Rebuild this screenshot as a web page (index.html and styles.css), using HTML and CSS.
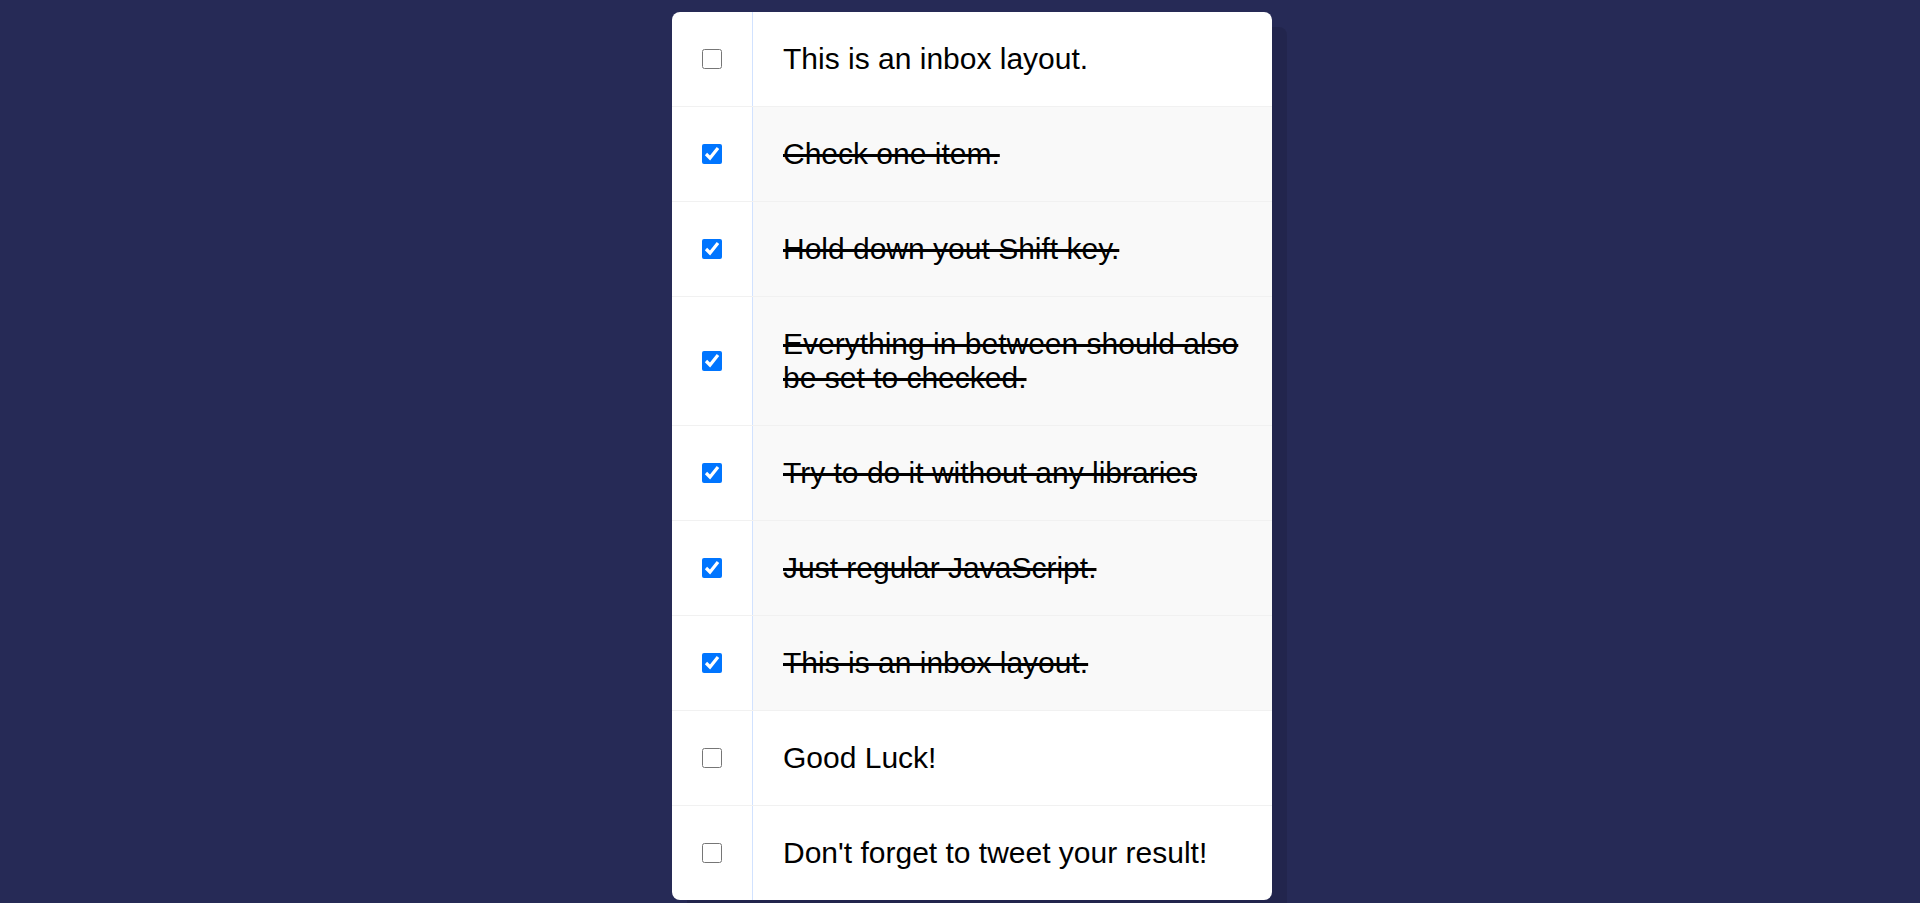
FILE: index.html
```html
<!DOCTYPE html>
<html lang="en">
<head>
<meta charset="UTF-8">
<title>Hold Shift to Check Multiple Checkboxes</title>
<link rel="stylesheet" href="styles.css">
</head>
<body>
  <div class="inbox">
    <div class="item">
      <input type="checkbox">
      <p>This is an inbox layout.</p>
    </div>
    <div class="item">
      <input type="checkbox" checked>
      <p>Check one item.</p>
    </div>
    <div class="item">
      <input type="checkbox" checked>
      <p>Hold down yout Shift key.</p>
    </div>
    <div class="item">
      <input type="checkbox" checked>
      <p>Everything in between should also be set to checked.</p>
    </div>
    <div class="item">
      <input type="checkbox" checked>
      <p>Try to do it without any libraries</p>
    </div>
    <div class="item">
      <input type="checkbox" checked>
      <p>Just regular JavaScript.</p>
    </div>
    <div class="item">
      <input type="checkbox" checked>
      <p>This is an inbox layout.</p>
    </div>
    <div class="item">
      <input type="checkbox">
      <p>Good Luck!</p>
    </div>
    <div class="item">
      <input type="checkbox">
      <p>Don't forget to tweet your result!</p>
    </div>
  </div>
</body>
</html>
```
FILE: styles.css
```css
html {
  background: #262a56;
  font-family: "Liberation Sans", Arial, sans-serif;
}

body {
  margin: 0;
  padding: 12px 0 0 24px;
}

.inbox {
  width: 600px;
  margin: 0 auto 40px;
  background: #ffffff;
  border-radius: 8px;
  box-shadow: 15px 15px 0 rgba(0, 0, 0, 0.1);
  overflow: hidden;
}

.item {
  display: flex;
  align-items: center;
  border-bottom: 1px solid #f1f1f1;
}

.item:last-child {
  border-bottom: 0;
}

.item input[type="checkbox"] {
  width: 20px;
  height: 20px;
  margin: 0 30px;
  flex: none;
}

.item p {
  margin: 0;
  padding: 30px;
  flex: 1;
  font-size: 30px;
  line-height: 34px;
  font-weight: 400;
  color: #000000;
  border-left: 1px solid #d1e2ff;
}

.item input:checked + p {
  background: #f9f9f9;
  text-decoration: line-through;
}
```
